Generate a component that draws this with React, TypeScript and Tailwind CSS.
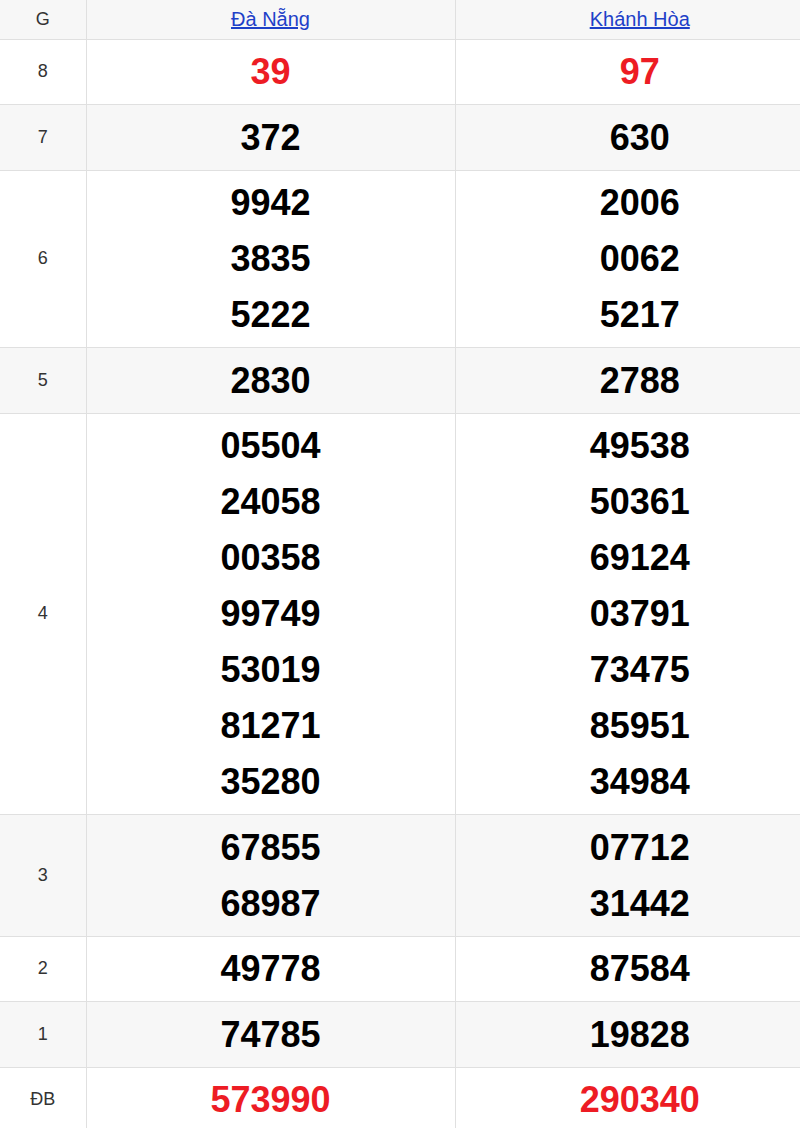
const rows: { g: string; a: string[]; b: string[]; red?: boolean }[] = [
  { g: '8', a: ['39'], b: ['97'], red: true },
  { g: '7', a: ['372'], b: ['630'] },
  { g: '6', a: ['9942', '3835', '5222'], b: ['2006', '0062', '5217'] },
  { g: '5', a: ['2830'], b: ['2788'] },
  { g: '4', a: ['05504', '24058', '00358', '99749', '53019', '81271', '35280'], b: ['49538', '50361', '69124', '03791', '73475', '85951', '34984'] },
  { g: '3', a: ['67855', '68987'], b: ['07712', '31442'] },
  { g: '2', a: ['49778'], b: ['87584'] },
  { g: '1', a: ['74785'], b: ['19828'] },
  { g: 'ĐB', a: ['573990'], b: ['290340'], red: true },
]

function Nums({ list, red }: { list: string[]; red?: boolean }) {
  return (
    <td className="border-l border-[#e0e0e0] pt-[4.5px] pb-[4px] text-center align-middle">
      {list.map(n => (
        <div key={n} className={`text-[36px] leading-[56px] font-bold ${red ? 'text-[#ed1c24]' : 'text-black'}`}>{n}</div>
      ))}
    </td>
  )
}

export default function App() {
  return (
    <div className="w-[800px] overflow-hidden bg-white font-['Liberation_Sans',Arial,sans-serif]">
      <table className="w-[824px] table-fixed border-collapse">
        <colgroup>
          <col className="w-[86px]" />
          <col className="w-[369px]" />
          <col className="w-[369px]" />
        </colgroup>
        <thead>
          <tr className="bg-[#f7f7f7] h-[39px] border-b border-[#e0e0e0]">
            <th className="font-normal text-[18px] text-[#333]">G</th>
            <th className="border-l border-[#e0e0e0] font-normal text-[20px]">
              <a href="#" className="text-[#1e40c8] underline">Đà Nẵng</a>
            </th>
            <th className="border-l border-[#e0e0e0] font-normal text-[20px]">
              <a href="#" className="text-[#1e40c8] underline">Khánh Hòa</a>
            </th>
          </tr>
        </thead>
        <tbody>
          {rows.map((r, i) => (
            <tr key={r.g} className={`border-b border-[#e0e0e0] ${i % 2 === 1 ? 'bg-[#f7f7f7]' : 'bg-white'}`}>
              <td className="text-center text-[18px] text-[#333] align-middle">{r.g}</td>
              <Nums list={r.a} red={r.red} />
              <Nums list={r.b} red={r.red} />
            </tr>
          ))}
        </tbody>
      </table>
    </div>
  )
}
